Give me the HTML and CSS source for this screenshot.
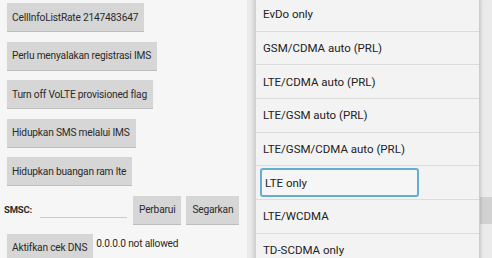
FILE: index.html
```html
<!DOCTYPE html>
<html>
  <head>
    <meta charset="UTF-8">
    <title>Radio info</title>
    <link rel="stylesheet" href="styles.css">
  </head>
  <body>
    <div class="shot left">
      <div class="row"><span class="btn">CellInfoListRate 2147483647</span></div>
      <div class="row"><span class="btn">Perlu menyalakan registrasi IMS</span></div>
      <div class="row"><span class="btn">Turn off VoLTE provisioned flag</span></div>
      <div class="row"><span class="btn">Hidupkan SMS melalui IMS</span></div>
      <div class="row"><span class="btn">Hidupkan buangan ram lte</span></div>
      <div class="row smsc">
        <span class="label">SMSC:</span>
        <span class="input"></span>
        <span class="btn small">Perbarui</span>
        <span class="btn small">Segarkan</span>
      </div>
      <div class="row dns">
        <span class="btn">Aktifkan cek DNS</span>
        <span class="note">0.0.0.0 not allowed</span>
      </div>
    </div>

    <div class="shot right">
      <div class="under">
        <span class="ghost-s">S</span>
        <span class="ghost-btn"></span>
      </div>
      <ul class="menu">
        <li>EvDo only</li>
        <li>GSM/CDMA auto (PRL)</li>
        <li>LTE/CDMA auto (PRL)</li>
        <li>LTE/GSM auto (PRL)</li>
        <li>LTE/GSM/CDMA auto (PRL)</li>
        <li class="focus"><span>LTE only</span></li>
        <li>LTE/WCDMA</li>
        <li>TD-SCDMA only</li>
      </ul>
    </div>
  </body>
</html>
```

FILE: styles.css
```css
html, body { margin: 0; padding: 0; }
body { width: 492px; height: 258px; overflow: hidden; display: flex; background: #fff;
       font-family: Roboto, "Noto Sans", sans-serif; color: #2a2a2a; }

.shot { height: 258px; overflow: hidden; }

/* left screenshot */
.left { width: 247px; background: #f6f6f6; padding: 3px 0 0 7px; box-sizing: border-box; }
.row { display: flex; align-items: center; height: 28px; margin-bottom: 10.5px; }
.btn { display: inline-flex; align-items: center; height: 28px; padding: 0 6px 0 5px;
       background: #d6d6d6; box-shadow: 0 1px 0 #bebebe; font-size: 10.2px; letter-spacing: -0.2px;
       white-space: nowrap; box-sizing: border-box; }
.smsc { margin-left: -3px; margin-top: 1.5px; margin-bottom: 10px; }
.label { font-weight: bold; font-size: 9.5px; width: 35px; letter-spacing: -0.2px; }
.input { width: 87px; height: 1px; margin: 16px 6px 0 1px; background: #cacaca; }
.btn.small { padding: 0 6px 0 6px; margin-right: 5px; }
.dns { align-items: flex-start; }
.note { font-size: 10.2px; letter-spacing: -0.2px; margin: 4px 0 0 3px; }

/* right screenshot */
.right { flex: 1; position: relative; background: #ebebeb; }
.under { position: absolute; inset: 0; }
.ghost-s { position: absolute; left: 9px; top: 204px; font-size: 10px; font-weight: bold; color: #333; }
.ghost-btn { position: absolute; left: 233px; top: 197px; width: 20px; height: 27px; background: #d2d2d2; }
.menu { position: absolute; left: 9px; top: -2px; width: 223px; margin: 0; padding: 0; list-style: none;
        background: #f3f3f3; box-shadow: -3px 0 4px rgba(0,0,0,.12), 2px 0 3px rgba(0,0,0,.15); }
.menu li { height: 33.7px; display: flex; align-items: center; padding-left: 7px;
           border-bottom: 1px solid #dcdcdc; box-sizing: border-box; font-size: 11.5px; color: #222; }
.menu li.focus { padding-left: 4px; }
.focus span { display: flex; align-items: center; width: 159px; height: 29px; padding-left: 3px;
              border: 2px solid #62b0cf; border-radius: 3px; box-sizing: border-box; background: #f6f6f6; }
```
